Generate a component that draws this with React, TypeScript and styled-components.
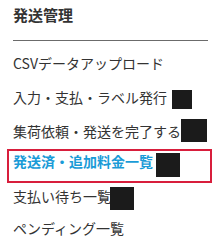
import styled, { createGlobalStyle } from "styled-components";

const GlobalStyle = createGlobalStyle`
  html, body {
    margin: 0;
    padding: 0;
    background: #ffffff;
  }
  body {
    font-family: "Noto Sans CJK JP", "Noto Sans", sans-serif;
    color: #333333;
  }
`;

type MenuItem = {
  label: string;
  active?: boolean;
  mask?: { w: number; h: number; gap: number; shift: number };
};

const items: MenuItem[] = [
  { label: "CSVデータアップロード" },
  { label: "入力・支払・ラベル発行", mask: { w: 20, h: 19, gap: 5, shift: 2 } },
  { label: "集荷依頼・発送を完了する", mask: { w: 26, h: 23, gap: 0, shift: -1 } },
  { label: "発送済・追加料金一覧", active: true, mask: { w: 24, h: 24, gap: 3, shift: 4 } },
  { label: "支払い待ち一覧", mask: { w: 24, h: 23, gap: -1, shift: 2 } },
  { label: "ペンディング一覧" },
];

const Sidebar = styled.nav`
  width: 221px;
  padding: 0 13px;
  box-sizing: border-box;
`;

const Title = styled.h2`
  margin: 0;
  padding-top: 5px;
  font-size: 15px;
  line-height: 20px;
  font-weight: 700;
  color: #333333;
`;

const Divider = styled.hr`
  margin: 15px 0 0;
  border: 0;
  border-top: 1px solid #6b6b6b;
`;

const List = styled.ul`
  list-style: none;
  margin: 5px 0 0;
  padding: 0;
`;

const Item = styled.li<{ $active?: boolean }>`
  display: flex;
  align-items: center;
  font-size: 14px;
  line-height: 20px;
  white-space: nowrap;
  color: ${(p) => (p.$active ? "#1a9bd7" : "#333333")};
  font-weight: ${(p) => (p.$active ? 700 : 400)};
  padding: ${(p) => (p.$active ? "0 0 10px 4px" : "7px 0")};
  margin: ${(p) => (p.$active ? "1px -4px 0 -6px" : "0")};
  border: ${(p) => (p.$active ? "2px solid #d81e3c" : "0")};
  &:nth-child(n + 5) {
    padding-top: 3px;
    padding-bottom: 9px;
  }
`;

const Mask = styled.span<{ $w: number; $h: number; $gap: number; $shift: number }>`
  display: inline-block;
  flex: none;
  width: ${(p) => p.$w}px;
  height: ${(p) => p.$h}px;
  margin: -20px 0 -20px ${(p) => p.$gap}px;
  transform: translateY(${(p) => p.$shift}px);
  background: #1b1b1b;
`;

export default function App() {
  return (
    <>
      <GlobalStyle />
      <Sidebar>
        <Title>発送管理</Title>
        <Divider />
        <List>
          {items.map((it) => (
            <Item key={it.label} $active={it.active}>
              <span>{it.label}</span>
              {it.mask && (
                <Mask $w={it.mask.w} $h={it.mask.h} $gap={it.mask.gap} $shift={it.mask.shift} />
              )}
            </Item>
          ))}
        </List>
      </Sidebar>
    </>
  );
}
